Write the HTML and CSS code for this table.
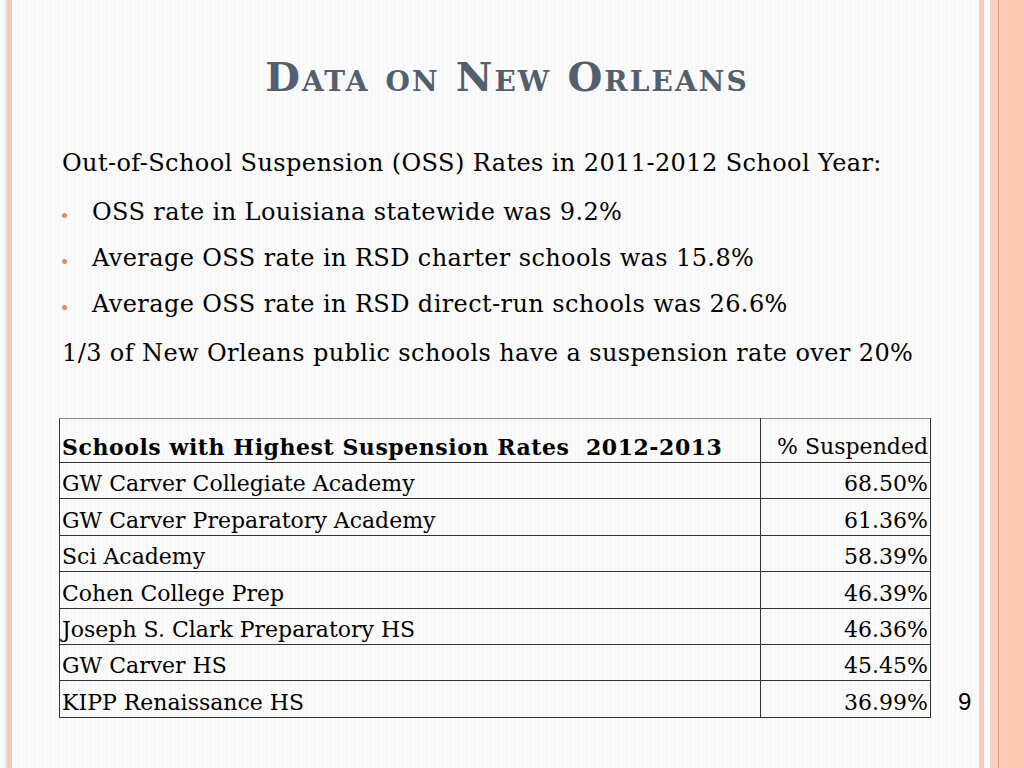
FILE: index.html
```html
<!DOCTYPE html>
<html>
<head>
<meta charset="utf-8">
<link rel="stylesheet" href="styles.css">
</head>
<body>
<div class="slide">
  <h1 class="title">Data on New Orleans</h1>
  <div class="content">
    <p class="line first">Out-of-School Suspension (OSS) Rates in 2011-2012 School Year:</p>
    <ul class="bullets">
      <li>OSS rate in Louisiana statewide was 9.2%</li>
      <li>Average OSS rate in RSD charter schools was 15.8%</li>
      <li>Average OSS rate in RSD direct-run schools was 26.6%</li>
    </ul>
    <p class="line last">1/3 of New Orleans public schools have a suspension rate over 20%</p>
  </div>
  <div class="table-area">
    <table class="data">
      <thead>
        <tr><th class="name">Schools with Highest Suspension Rates&nbsp; 2012-2013</th><th class="pct">% Suspended</th></tr>
      </thead>
      <tbody>
        <tr><td class="name">GW Carver Collegiate Academy</td><td class="pct">68.50%</td></tr>
        <tr><td class="name">GW Carver Preparatory Academy</td><td class="pct">61.36%</td></tr>
        <tr><td class="name">Sci Academy</td><td class="pct">58.39%</td></tr>
        <tr><td class="name">Cohen College Prep</td><td class="pct">46.39%</td></tr>
        <tr><td class="name">Joseph S. Clark Preparatory HS</td><td class="pct">46.36%</td></tr>
        <tr><td class="name">GW Carver HS</td><td class="pct">45.45%</td></tr>
        <tr><td class="name">KIPP Renaissance HS</td><td class="pct">36.99%</td></tr>
      </tbody>
    </table>
    <div class="page-num">9</div>
  </div>
</div>
</body>
</html>
```

FILE: styles.css
```css
html, body {
  margin: 0;
  padding: 0;
}
body {
  width: 1024px;
  height: 768px;
  overflow: hidden;
  background:
    linear-gradient(to right,
      transparent 0 5px,
      #f3e2d6 5px 7px,
      #fbc6b6 7px 12px,
      transparent 12px 979px,
      #f8c9bb 979px 984px,
      #fcfcfc 984px 990px,
      #fdd0bd 990px 998px,
      #dc9c7e 998px 999px,
      #fdcbb4 999px 1008px,
      #fdc9b2 1008px 1024px),
    repeating-linear-gradient(to right, #fafafa 0 3px, #f6f6f6 3px 4px, #fbfbfb 4px 7px, #f7f7f7 7px 8px),
    #fafafa;
}
.slide {
  width: 1024px;
  height: 768px;
  display: flex;
  flex-direction: column;
  font-family: "DejaVu Serif", "Liberation Serif", serif;
  color: #000;
}
.title {
  margin: 52px 0 0 0;
  padding-right: 10px;
  text-align: center;
  font-size: 40px;
  line-height: 50px;
  font-weight: bold;
  font-variant: small-caps;
  letter-spacing: 2.1px;
  color: #525f6e;
}
.content {
  margin: 38px 0 0 62px;
  font-size: 24px;
  letter-spacing: 0.4px;
  line-height: 46px;
}
.line {
  margin: 0;
}
.line.first {
  margin-bottom: 3px;
}
.line.last {
  margin-top: 3px;
}
.bullets {
  list-style: none;
  margin: 0;
  padding: 0;
}
.bullets li {
  display: flex;
  align-items: center;
}
.bullets li::before {
  content: "";
  width: 5px;
  height: 5px;
  border-radius: 50%;
  background: #e48a5f;
  margin: 6px 25px 0 0;
  flex: none;
}
.table-area {
  display: flex;
  align-items: flex-end;
  margin: 42px 0 0 59px;
}
.data {
  border-collapse: collapse;
  font-size: 22px;
  width: 872px;
}
.data th, .data td {
  border: 1px solid #333;
  padding: 0 2px;
  height: 35.4px;
  vertical-align: bottom;
  line-height: 28px;
}
.data thead th {
  border-top-color: #888;
  height: 42px;
  padding-bottom: 1px;
}
.data th.name {
  text-align: left;
  font-weight: bold;
  letter-spacing: 0.55px;
  width: 696px;
}
.data th.pct {
  font-weight: normal;
  text-align: right;
}
.data td.pct {
  text-align: right;
}
.page-num {
  font-family: "Liberation Sans", Arial, sans-serif;
  font-size: 24px;
  line-height: 28px;
  color: #000;
  margin: 0 0 2px 27px;
}
```
